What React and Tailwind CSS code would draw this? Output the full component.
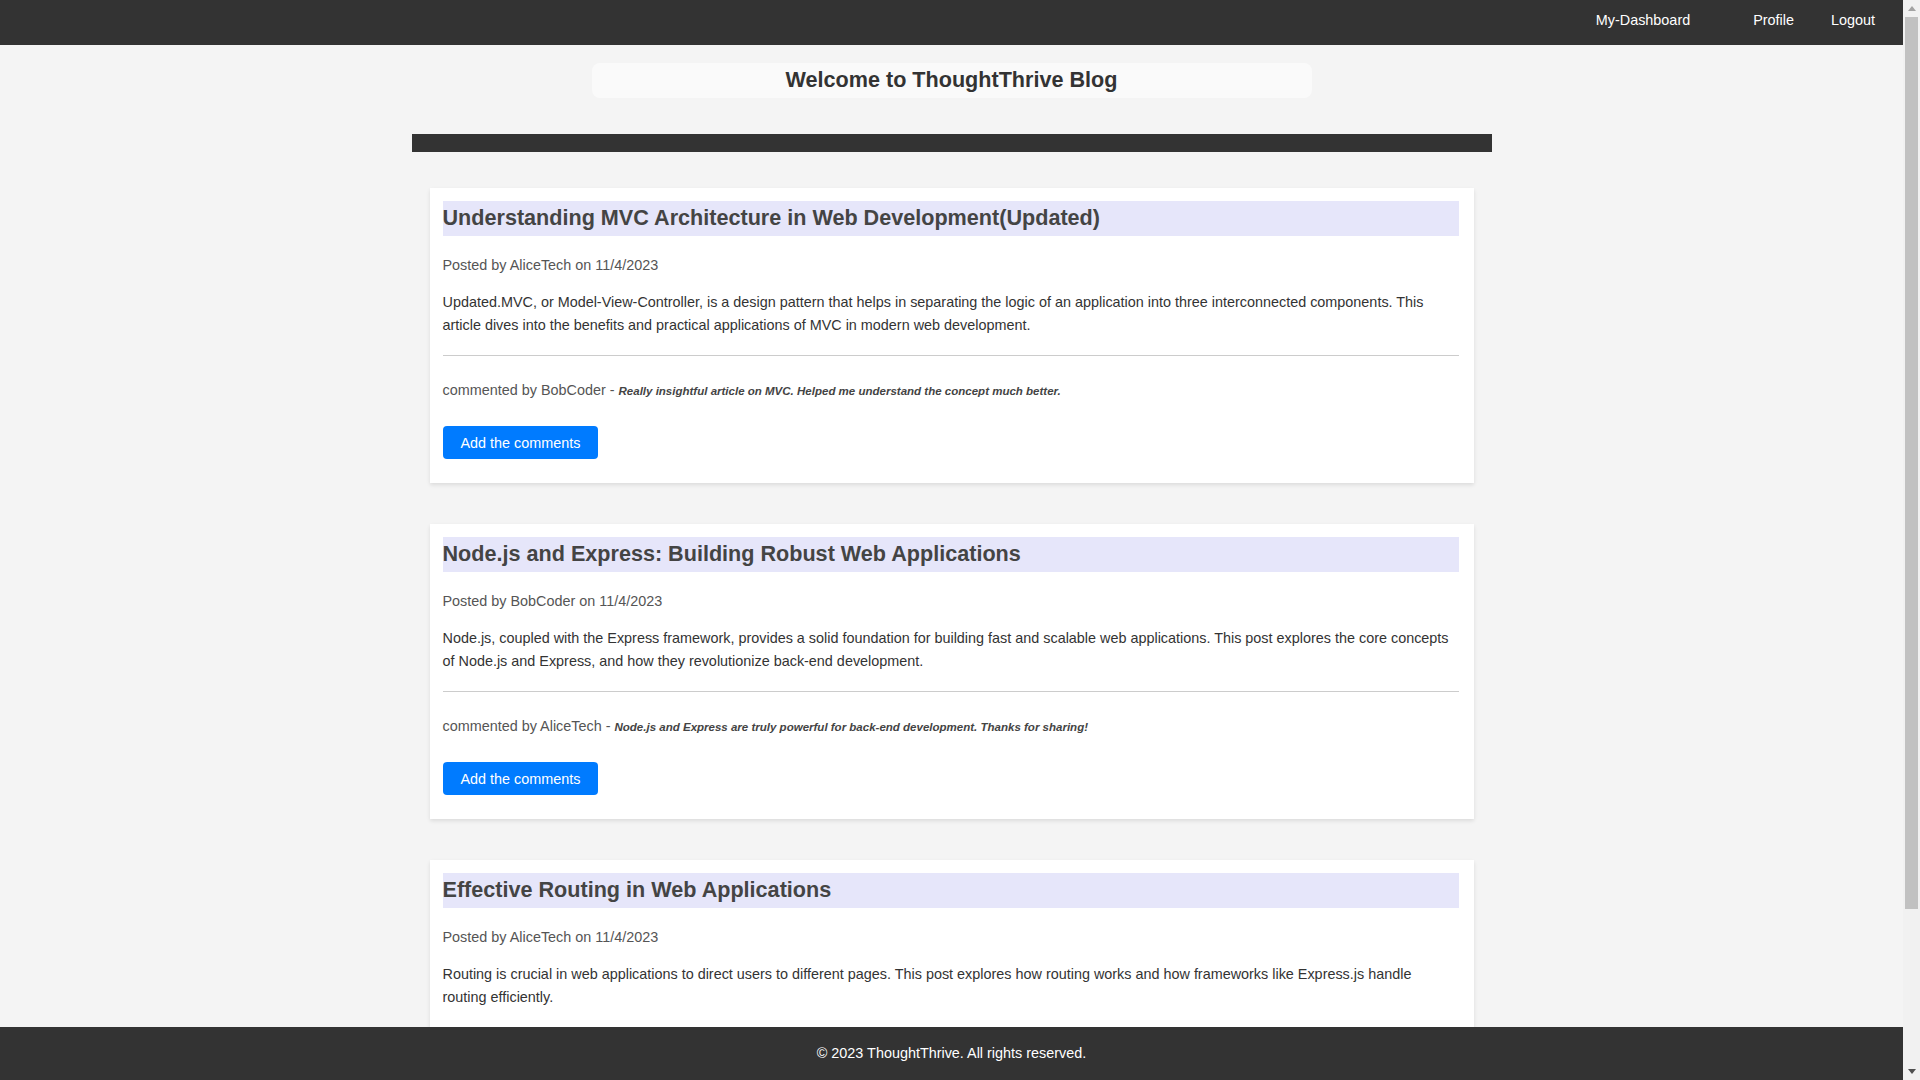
import React from "react";

const posts = [
  {
    id: 1,
    title: "Understanding MVC Architecture in Web Development(Updated)",
    author: "AliceTech",
    date: "11/4/2023",
    content:
      "Updated.MVC, or Model-View-Controller, is a design pattern that helps in separating the logic of an application into three interconnected components. This article dives into the benefits and practical applications of MVC in modern web development.",
    comments: [
      { user: "BobCoder", text: "Really insightful article on MVC. Helped me understand the concept much better." },
    ],
  },
  {
    id: 2,
    title: "Node.js and Express: Building Robust Web Applications",
    author: "BobCoder",
    date: "11/4/2023",
    content:
      "Node.js, coupled with the Express framework, provides a solid foundation for building fast and scalable web applications. This post explores the core concepts of Node.js and Express, and how they revolutionize back-end development.",
    comments: [
      { user: "AliceTech", text: "Node.js and Express are truly powerful for back-end development. Thanks for sharing!" },
    ],
  },
  {
    id: 3,
    title: "Effective Routing in Web Applications",
    author: "AliceTech",
    date: "11/4/2023",
    content:
      "Routing is crucial in web applications to direct users to different pages. This post explores how routing works and how frameworks like Express.js handle routing efficiently.",
    comments: [
      { user: "BobCoder", text: "Great explanation of routing. Very clear and easy to follow." },
    ],
  },
];

const PostCard = ({ post }) => (
  <div className="bg-white mx-[18px] pt-[13px] pb-[24px] pl-[13px] pr-[15px] shadow-[0_2px_4px_rgba(0,0,0,0.1)]">
    <h2 className="bg-[#e6e6fa] h-[35px] leading-[33px] text-[21.6px] font-bold text-[#444]">{post.title}</h2>
    <p className="mt-[21px] leading-[16px] text-[#555]">
      Posted by {post.author} on {post.date}
    </p>
    <p className="mt-[18px] leading-[1.6] text-[#333]">{post.content}</p>
    <hr className="mt-[18px] border-0 border-t border-[#ccc]" />
    {post.comments.map((c, i) => (
      <p key={i} className="mt-[26px] leading-[16px] text-[#555]">
        commented by {c.user} - <em className="font-bold text-[11.52px] text-[#444]">{c.text}</em>
      </p>
    ))}
    <button className="mt-[27px] h-[33px] px-[18px] bg-[#007bff] text-white rounded-[4px] leading-[16px]">
      Add the comments
    </button>
  </div>
);

// page scrollbar as seen in the screenshot
const ScrollBar = () => (
  <div className="fixed top-0 right-0 w-[17px] h-screen bg-[#f1f1f1] flex flex-col">
    <div className="h-[17px] flex items-center justify-center">
      <svg width="8" height="5" viewBox="0 0 8 5"><path d="M0 5 L4 0 L8 5 Z" fill="#a3a3a3" /></svg>
    </div>
    <div className="h-[892px] mx-[2px] bg-[#c1c1c1]"></div>
    <div className="flex-1"></div>
    <div className="h-[17px] flex items-center justify-center">
      <svg width="8" height="5" viewBox="0 0 8 5"><path d="M0 0 L8 0 L4 5 Z" fill="#505050" /></svg>
    </div>
  </div>
);

const App = () => {
  return (
    <div className="min-h-screen pr-[17px] bg-[#f4f4f4] text-[14.4px] font-['Liberation_Sans',Arial,sans-serif]">
      <nav className="h-[45px] bg-[#333] flex justify-end pt-[12px] pr-[28px] text-white leading-[16px]">
        <a href="#" className="mr-[63px]">My-Dashboard</a>
        <a href="#" className="mr-[37px]">Profile</a>
        <a href="#">Logout</a>
      </nav>

      <main className="pb-[112px]">
        <div className="w-[720px] mx-auto mt-[18px] h-[35px] bg-[#fafafa] rounded-[8px] flex items-center justify-center">
          <h1 className="text-[21.6px] font-bold text-[#333]">Welcome to ThoughtThrive Blog</h1>
        </div>

        <div className="w-[1080px] mx-auto mt-[36px]">
          <div className="h-[18px] bg-[#333]"></div>
          <div className="mt-[36px] flex flex-col gap-[41px]">
            {posts.map((p) => (
              <PostCard key={p.id} post={p} />
            ))}
          </div>
        </div>
      </main>

      <footer className="fixed bottom-0 left-0 right-[17px] h-[53px] bg-[#333] text-white flex items-center justify-center">
        <p>© 2023 ThoughtThrive. All rights reserved.</p>
      </footer>

      <ScrollBar />
    </div>
  );
};

export default App;
